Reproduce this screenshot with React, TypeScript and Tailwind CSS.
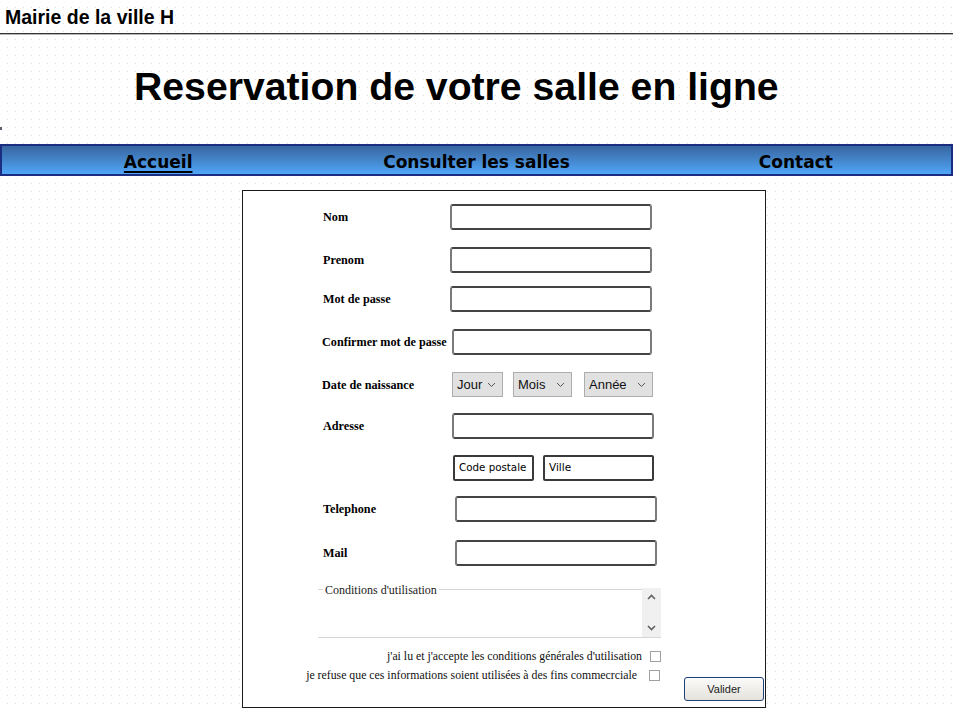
import React from "react";

const serif = "font-['Liberation_Serif','Times_New_Roman',serif]";
const sans = "font-['Liberation_Sans',Arial,sans-serif]";
const comic = "font-['DejaVu_Sans',sans-serif]";

function Label({ children }: { children: React.ReactNode }) {
  return (
    <div className={`${serif} w-[127px] shrink-0 whitespace-nowrap text-[12.2px] font-bold leading-none text-black`}>
      {children}
    </div>
  );
}

function Box({ className = "" }: { className?: string }) {
  return (
    <div
      className={`h-[26px] rounded-[3px] border-2 border-x-[#7a7a7a] border-y-[#444] bg-white ${className}`}
    />
  );
}

function Chevron() {
  return (
    <svg width="9" height="6" viewBox="0 0 9 6" className="shrink-0">
      <path d="M1 1 L4.5 4.5 L8 1" fill="none" stroke="#555" strokeWidth="1" />
    </svg>
  );
}

function Select({ text, className }: { text: string; className: string }) {
  return (
    <div
      className={`flex h-[25px] items-center justify-between border border-[#adadad] bg-[#e1e1e1] pl-[4px] pr-[6px] ${sans} text-[13px] text-[#111] ${className}`}
    >
      <span className="leading-none">{text}</span>
      <Chevron />
    </div>
  );
}

function Row({ mt, h = 26, children }: { mt: string; h?: number; children: React.ReactNode }) {
  return (
    <div className={`flex items-center pl-[80px] ${mt} ${h === 25 ? "h-[25px]" : "h-[26px]"}`}>
      {children}
    </div>
  );
}

export default function App() {
  return (
    <div className="h-[711px] w-full overflow-hidden bg-white bg-[image:radial-gradient(circle_at_7.5px_7.5px,#e0e0e0_0.6px,transparent_1.1px)] bg-[size:8px_8px]">
      {/* Header */}
      <div className="h-[34px] border-b border-[#333] pl-[5px] pt-[8px] shadow-[0_1px_0_#b5b5b5]">
        <div className={`${sans} text-[19.5px] font-bold leading-none text-black`}>Mairie de la ville H</div>
      </div>

      {/* Title */}
      <div className={`${sans} mt-[33px] pl-[134px] text-[39.2px] font-bold leading-none text-black`}>
        Reservation de votre salle en ligne
      </div>

      <div className="mt-[21px] h-[3px] w-[2px] bg-[#5a5f70]" />

      {/* Nav */}
      <div className="mt-[14px] grid h-[32px] grid-cols-3 items-center border-2 border-[#1b2d80] bg-linear-to-b from-[#3866a0] to-[#50a6f8] pt-[4px] text-center">
        <span className={`${comic} -ml-[4px] text-[17px] font-bold text-black underline decoration-2 underline-offset-[3px]`}>Accueil</span>
        <span className={`${comic} text-[17px] font-bold text-black`}>Consulter les salles</span>
        <span className={`${comic} ml-[6px] text-[17px] font-bold text-black`}>Contact</span>
      </div>

      {/* Form */}
      <div className="ml-[242px] mt-[14px] h-[518px] w-[524px] border border-[#1a1a1a] bg-white">
        <Row mt="mt-[13px]">
          <Label>Nom</Label>
          <Box className="w-[202px]" />
        </Row>
        <Row mt="mt-[17px]">
          <Label>Prenom</Label>
          <Box className="w-[202px]" />
        </Row>
        <Row mt="mt-[13px]">
          <Label>Mot de passe</Label>
          <Box className="w-[202px]" />
        </Row>
        <Row mt="mt-[17px]">
          <div className="-ml-px">
            <Label>Confirmer mot de passe</Label>
          </div>
          <Box className="ml-[3px] w-[200px]" />
        </Row>
        <Row mt="mt-[17px]" h={25}>
          <div className="-ml-px">
            <Label>Date de naissance</Label>
          </div>
          <Select text="Jour" className="ml-[3px] w-[51px]" />
          <Select text="Mois" className="ml-[10px] w-[59px]" />
          <Select text="Année" className="ml-[12px] w-[69px]" />
        </Row>
        <Row mt="mt-[16px]">
          <Label>Adresse</Label>
          <Box className="ml-[2px] w-[202px]" />
        </Row>
        <Row mt="mt-[16px]">
          <div className="w-[127px] shrink-0" />
          <div className={`ml-[3px] flex h-[26px] w-[81px] items-center whitespace-nowrap rounded-[2px] border-2 border-[#3a3a3a] pl-[4px] ${comic} text-[10.3px] text-black`}>
            Code postale
          </div>
          <div className={`ml-[9px] flex h-[26px] w-[111px] items-center rounded-[2px] border-2 border-[#3a3a3a] pl-[4px] ${comic} text-[10.5px] text-black`}>
            Ville
          </div>
        </Row>
        <Row mt="mt-[15px]">
          <Label>Telephone</Label>
          <Box className="ml-[5px] w-[202px]" />
        </Row>
        <Row mt="mt-[18px]">
          <Label>Mail</Label>
          <Box className="ml-[5px] w-[202px]" />
        </Row>

        {/* Conditions */}
        <div className="ml-[75px] mt-[22px] flex h-[50px] w-[343px] border-b border-[#d6d6d6]">
          <div className="flex-1">
            <div className="mt-px flex h-px items-center">
              <div className="h-px w-[5px] bg-[#d6d6d6]" />
              <span className={`${serif} px-[2px] text-[12px] leading-none text-[#222]`}>Conditions d'utilisation</span>
              <div className="h-px flex-1 bg-[#d6d6d6]" />
            </div>
          </div>
          <div className="flex h-[49px] w-[19px] flex-col items-center justify-between bg-[#f0f0f0] py-[6px]">
            <svg width="9" height="6" viewBox="0 0 9 6">
              <path d="M1 5 L4.5 1.5 L8 5" fill="none" stroke="#606060" strokeWidth="1.6" />
            </svg>
            <svg width="9" height="6" viewBox="0 0 9 6">
              <path d="M1 1 L4.5 4.5 L8 1" fill="none" stroke="#606060" strokeWidth="1.6" />
            </svg>
          </div>
        </div>

        {/* Checkboxes */}
        <div className="mt-[13px] flex h-[11px] w-[418px] items-center justify-end">
          <span className={`${serif} whitespace-nowrap text-[11.8px] leading-none text-[#111]`}>
            j'ai lu et j'accepte les conditions générales d'utilisation
          </span>
          <div className="ml-[8px] h-[11px] w-[11px] border border-[#a0a0a0] bg-white" />
        </div>
        <div className="mt-[8px] flex items-start">
          <div className="flex h-[11px] w-[418px] items-center justify-end">
            <span className={`${serif} whitespace-nowrap text-[11.8px] leading-none text-[#111]`}>
              je refuse que ces informations soient utilisées à des fins commecrciale
            </span>
            <div className="ml-[12px] mr-px h-[11px] w-[11px] border border-[#a0a0a0] bg-white" />
          </div>
          <button
            className={`ml-[23px] mt-[7px] flex h-[24px] w-[80px] items-center justify-center rounded-[3px] border border-[#1e3f78] bg-linear-to-b from-[#fbfbfb] to-[#e4e2da] ${sans} text-[11px] text-[#222]`}
          >
            Valider
          </button>
        </div>
      </div>
    </div>
  );
}
